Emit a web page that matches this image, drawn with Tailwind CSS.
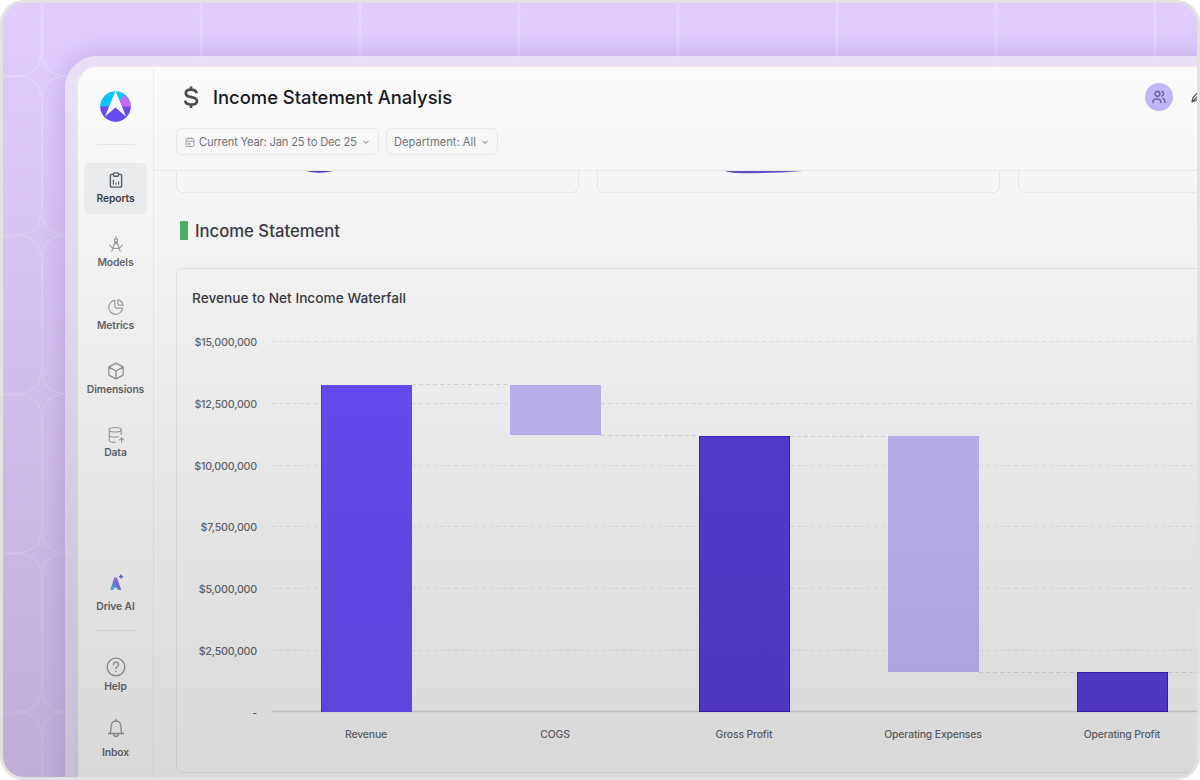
<!DOCTYPE html>
<html lang="en">
<head>
  <meta charset="UTF-8" />
  <meta name="viewport" content="width=device-width, initial-scale=1.0"/>
  <title>Income Statement Analysis</title>
  <script src="https://cdn.jsdelivr.net/npm/@tailwindcss/browser@4"></script>
</head>

<body class="bg-white font-['Inter','Liberation_Sans',sans-serif]">

  <div class="relative w-[1200px] h-[780px] rounded-[24px] border-[3px] border-[#e2e2e0] bg-[#e0cdfe] overflow-hidden">

    <!-- Background tiles -->
    <svg class="absolute inset-0" width="1194" height="774" fill="none">
      <defs>
        <pattern id="grid" x="38.5" y="73" width="159" height="159" patternUnits="userSpaceOnUse">
          <g stroke="#fff" stroke-opacity=".27">
            <path d="M.5 22v115M159.5 22v115" stroke-width="2"/>
            <path d="M22 .5h115M22 159.5h115" stroke-width="2"/>
            <path d="M.5 22C1 9 9 1 22 .5M137 .5C150 1 158 9 158.5 22M158.5 137C158 150 150 158 137 158.5M22 158.5C9 158 1 150 .5 137" stroke-width="1.2"/>
          </g>
        </pattern>
      </defs>
      <rect width="1194" height="774" fill="url(#grid)"/>
    </svg>

    <!-- Glass frame -->
    <div class="relative ml-[62px] mt-[53px] w-[1180px] h-[760px] rounded-tl-[32px] bg-[#eee7f5]/80 pl-[10px] pt-[10px] shadow-[0_0_26px_rgba(85,45,150,0.2)]">
      <div class="w-full h-full rounded-tl-[22px] bg-linear-to-b from-[#ece9fa] to-[#dfe1f4] pl-[3px]">
        <div class="flex w-full h-full rounded-tl-[20px] bg-[#fefefe] border-t border-[#fbeaf6]">

          <!-- Sidebar -->
          <aside class="w-[76px] shrink-0 border-r border-[#f0f0f0] flex flex-col items-center text-[10.3px] font-semibold tracking-[-0.1px] leading-[14px] text-[#686b72]">
            <svg class="mt-[24px] shrink-0" width="31" height="31" viewBox="0 0 31 31">
              <clipPath id="disc"><circle cx="15.5" cy="15.5" r="15.3"/></clipPath>
              <g clip-path="url(#disc)">
                <path d="M0 0h31v16H0z" fill="#0ec8fc"/>
                <path d="M19 11l6-7 6 2v10H21z" fill="#c86cf0"/>
                <path d="M0 15.5h31V31H0z" fill="#6a4cf6"/>
                <path d="M15.5 0L26 25.5 15.5 16.5 5 25.5z" fill="#fff"/>
              </g>
            </svg>
            <div class="mt-[22px] w-[38px] h-px shrink-0 bg-[#ebebeb]"></div>

            <nav class="mt-[18px] flex flex-col gap-[12.5px]">
              <a class="w-[63px] h-[51px] rounded-[6px] bg-[#f1f3f4] flex flex-col items-center pt-[8px] text-[#3f434a]">
                <svg width="18" height="18" viewBox="0 0 24 24" fill="none" stroke="#565b61" stroke-width="1.8" stroke-linecap="round" stroke-linejoin="round">
                  <path d="M8.5 4.5H6.5a2 2 0 0 0-2 2v13a2 2 0 0 0 2 2h11a2 2 0 0 0 2-2v-13a2 2 0 0 0-2-2h-2"/>
                  <rect x="8.5" y="2.5" width="7" height="4.5" rx="1.8"/>
                  <path stroke-width="1.5" d="M8.5 12.5v5M12 16v1.500M15.5 14.5v3"/>
                </svg>
                <span class="mt-[2px]">Reports</span>
              </a>
              <a class="w-[63px] h-[51px] flex flex-col items-center pt-[8px]">
                <svg width="18" height="18" viewBox="0 0 24 24" fill="none" stroke="#a3a5a8" stroke-width="1.6" stroke-linecap="round" stroke-linejoin="round">
                  <circle cx="12" cy="7" r="2.2"/>
                  <path d="M12 2.5v2.3M10.8 9L6.5 21.5M13.2 9l4.3 12.5M3.5 13.5c2.2 3.3 5.2 4.5 8.5 4.5s6.3-1.2 8.5-4.5M10 13l2-4 2 4"/>
                </svg>
                <span class="mt-[2px]">Models</span>
              </a>
              <a class="w-[63px] h-[51px] flex flex-col items-center pt-[8px]">
                <svg width="18" height="18" viewBox="0 0 24 24" fill="none" stroke="#a3a5a8" stroke-width="1.6" stroke-linecap="round" stroke-linejoin="round">
                  <path d="M10.5 3.2a9.3 9.3 0 1 0 10.3 10.3h-8.3a2 2 0 0 1-2-2z"/>
                  <path d="M14.5 2.5v5a2 2 0 0 0 2 2h5a8.5 8.5 0 0 0-7-7z"/>
                </svg>
                <span class="mt-[2px]">Metrics</span>
              </a>
              <a class="w-[63px] h-[51px] flex flex-col items-center pt-[8px]">
                <svg width="18" height="18" viewBox="0 0 24 24" fill="none" stroke="#97999c" stroke-width="1.7" stroke-linecap="round" stroke-linejoin="round">
                  <path d="M12 1.5l9.5 5v11l-9.5 5-9.5-5v-11zM2.5 6.5L12 12l9.5-5.5M12 12v10.5"/>
                </svg>
                <span class="mt-[2px]">Dimensions</span>
              </a>
              <a class="w-[63px] h-[51px] flex flex-col items-center pt-[9px]">
                <svg width="18" height="18" viewBox="0 0 24 24" fill="none" stroke="#a3a5a8" stroke-width="1.6" stroke-linecap="round" stroke-linejoin="round">
                  <ellipse cx="11" cy="5" rx="8" ry="3"/>
                  <path d="M3 5v14c0 1.6 3.5 2.8 8 2.8M19 5v6.5M3 12c0 1.6 3.5 2.8 8 2.8 1.8 0 3.4-.2 4.7-.5M19.5 22v-6M16.8 18.5l2.7-2.7 2.7 2.7"/>
                </svg>
                <span class="mt-[1px]">Data</span>
              </a>
            </nav>

            <a class="mt-[106px] flex flex-col items-center">
              <svg width="18" height="18" viewBox="0 0 18 18">
                <defs>
                  <linearGradient id="ai" x1="0" y1="1" x2="1" y2="0">
                    <stop offset="0.15" stop-color="#45cdf2"/>
                    <stop offset="0.5" stop-color="#7c7aee"/>
                    <stop offset="0.85" stop-color="#c06ae0"/>
                  </linearGradient>
                </defs>
                <path d="M7.3 3.5h2.7L14.3 16h-3.1l-2.5-3-2.7 3H3.2z" fill="url(#ai)"/>
                <path d="M14 .5l.6 1.5 1.5.6-1.5.6-.6 1.5-.6-1.5-1.5-.6 1.5-.6z" fill="#7468d8" stroke="#7468d8" stroke-width=".8"/>
              </svg>
              <span class="mt-[7px]">Drive AI</span>
            </a>
            <div class="mt-[17px] w-[38px] h-px shrink-0 bg-[#e8e8e8]"></div>
            <a class="mt-[26px] flex flex-col items-center">
              <svg width="20" height="20" viewBox="0 0 20 20" fill="none" stroke="#97999c" stroke-width="1.3" stroke-linecap="round">
                <circle cx="10" cy="10" r="8.8"/>
                <path d="M7.5 7.8c0-3.6 5-3.4 5-.4 0 2-2.5 2-2.5 4.3M10 14.3v.2"/>
              </svg>
              <span class="mt-[2px]">Help</span>
            </a>
            <a class="mt-[25px] flex flex-col items-center">
              <svg width="20" height="20" viewBox="0 0 20 20" fill="none" stroke="#97999c" stroke-width="1.3" stroke-linecap="round" stroke-linejoin="round">
                <path d="M2.500 15.500h15M4 15.500c1-1.500 1-3 1-6.500 0-3.500 2-6 5-6s5 2.500 5 6c0 3.500 0 5 1 6.500M10 3V1.500M7.500 15.800c0 3.600 5 3.600 5 0"/>
              </svg>
              <span class="mt-[7px]">Inbox</span>
            </a>
          </aside>

          <main class="flex-1 min-w-0 overflow-hidden">

            <!-- Header -->
            <header class="h-[104px] border-b border-[#eeeeee] pl-[22px] pt-[16px]">
              <div class="flex items-center h-[28px]">
                <svg width="30" height="26" viewBox="0 0 30 26" fill="none" stroke="#4c4d4f" stroke-width="2.7">
                  <path d="M20.7 9.3C20.2 7 18 5.7 15 5.7c-3 0-5.2 1.4-5.2 3.7 0 5.4 11.2 2 11.2 7.6 0 2.4-2.3 3.7-5.8 3.7-3.4 0-5.7-1.5-6-4M15 2.5v3.5M15 20.5v3.5"/>
                </svg>
                <h1 class="mt-[2px] ml-[7px] text-[18.4px] font-medium text-[#17191d]">Income Statement Analysis</h1>
                <div class="ml-auto mr-[41px] flex items-center">
                  <div class="w-[28px] h-[28px] rounded-full bg-[#c5bafa] flex items-center justify-center">
                    <svg width="14" height="14" viewBox="0 0 14 14" fill="none" stroke="#65598f" stroke-width="1.3" stroke-linecap="round">
                      <circle cx="5.5" cy="3.8" r="2.5"/>
                      <path d="M1 12.5v-.8c0-3.8 7.8-3.8 7.800 0v.8M9.8 1.4c2.4.6 2.4 4.2 0 4.8M10.8 8.4c1.5.5 2.2 1.6 2.2 3.2v.9"/>
                    </svg>
                  </div>
                  <svg class="ml-[17px]" width="14" height="14" viewBox="0 0 14 14" fill="none" stroke="#57595d" stroke-width="1.2" stroke-linejoin="round">
                    <path d="M2 12l1-4.5 6-6 3 3-6 6zM2 12l5-5"/>
                  </svg>
                </div>
              </div>

              <div class="mt-[17px] flex gap-[7px] text-[11.2px] text-[#74767a]">
                <div class="w-[203px] h-[27px] rounded-[6px] border border-[#eeeeee] flex items-center pl-[8px] pt-[1px]">
                  <svg class="shrink-0" width="10" height="10" viewBox="0 0 10 10" fill="none" stroke="#9a9c9f" stroke-width=".9">
                    <rect x="1" y="1.5" width="8" height="8" rx="1.2"/>
                    <path d="M1 4.2h8M3.2.3v2M6.8.3v2M3 6.3h1.5v1.2H3z"/>
                  </svg>
                  <span class="ml-[4px] whitespace-nowrap tracking-[-0.2px]">Current Year: Jan 25 to Dec 25</span>
                  <svg class="ml-[5px] shrink-0" width="8" height="8" viewBox="0 0 8 8" fill="none" stroke="#a5a6a9" stroke-width="1.1"><path d="M1.5 2.8L4 5.2l2.5-2.4"/></svg>
                </div>
                <div class="w-[112px] h-[27px] rounded-[6px] border border-[#eeeeee] flex items-center pl-[7px] pt-[1px]">
                  <span class="whitespace-nowrap">Department: All</span>
                  <svg class="ml-[5px]" width="8" height="8" viewBox="0 0 8 8" fill="none" stroke="#a5a6a9" stroke-width="1.1"><path d="M1.5 2.8L4 5.2l2.5-2.4"/></svg>
                </div>
              </div>
            </header>

            <!-- Bottom edge of the KPI cards scrolled under the header -->
            <div class="ml-[22px] flex gap-[18px]">
              <div class="w-[403px] h-[22px] shrink-0 rounded-b-[7px] border border-t-0 border-[#efefef]">
                <svg class="ml-[129px] block" width="28" height="4"><path d="M0 0h27Q13 3.5 0 0z" fill="#5436c8"/></svg>
              </div>
              <div class="w-[403px] h-[22px] shrink-0 rounded-b-[7px] border border-t-0 border-[#efefef]">
                <svg class="ml-[127px] block" width="80" height="4"><path d="M0 0h78Q40 3 10 1.900 4 1.500 0 0z" fill="#6a4ed0"/></svg>
              </div>
              <div class="w-[403px] h-[22px] shrink-0 rounded-b-[7px] border border-t-0 border-[#efefef]"></div>
            </div>

            <div class="ml-[26px] mt-[25px] h-[24px] flex items-center">
              <div class="w-[8px] h-[19px] rounded-[1px] bg-[#4eb468]"></div>
              <h2 class="mt-[3px] ml-[7px] text-[16.7px] font-medium text-[#3a3d48]">Income Statement</h2>
            </div>

            <!-- Waterfall chart -->
            <section class="ml-[22px] mt-[26px] w-[1100px] h-[505px] rounded-[7px] border border-[#ebebeb]">
              <h3 class="ml-[15px] mt-[19px] text-[13.7px] leading-[20px] font-medium text-[#3a3d48]">Revenue to Net Income Waterfall</h3>
              <div class="flex mt-[27px]">
                <div class="mt-[1px] w-[80px] h-[385px] flex flex-col justify-between text-right text-[10.7px] tracking-[-0.2px] leading-[14px] font-medium text-[#686b72]">
                  <span>$15,000,000</span>
                  <span>$12,500,000</span>
                  <span>$10,000,000</span>
                  <span>$7,500,000</span>
                  <span>$5,000,000</span>
                  <span>$2,500,000</span>
                  <span>-</span>
                </div>
                <div class="ml-[15px]">
                  <svg class="mt-[5px] block" width="930" height="373" fill="none">
                    <g stroke="#eeeeee" stroke-dasharray="4 3">
                      <path d="M0 1.5h930" stroke="#e8e8e8"/>
                      <path d="M0 63.5h930" stroke="#e8e8e8"/>
                      <path d="M0 125.5h930M0 186.5h930M0 248.5h930M0 310.5h930" stroke="#ebebeb"/>
                    </g>
                    <g stroke="#e0e0e0" stroke-dasharray="4 3">
                      <path d="M140 44.5h98M329 95.5h98M518 96.5h98M707 332.5h98M896 332.5h34"/>
                    </g>
                    <path d="M0 371.5h930" stroke="#dcdcdc" stroke-width="1.5"/>
                    <rect x="49" y="45" width="91" height="327" fill="#6d4ffe"/>
                    <path d="M49.5 45v327" stroke="#5638cf"/>
                    <rect x="238" y="45" width="91" height="50" fill="#c8bcfb"/>
                    <rect x="427.5" y="96.5" width="90" height="275" fill="#5a3fde" stroke="#421fb8"/>
                    <rect x="616" y="96" width="91" height="236" fill="#c8bcfb"/>
                    <rect x="805.5" y="332.5" width="90" height="39" fill="#5a3fde" stroke="#421fb8"/>
                  </svg>
                  <div class="mt-[15px] flex text-center text-[10.4px] tracking-[-0.15px] leading-[14px] font-medium text-[#686b72]">
                    <span class="w-[188px] mr-px shrink-0">Revenue</span>
                    <span class="w-[188px] mr-px shrink-0">COGS</span>
                    <span class="w-[188px] mr-px shrink-0">Gross Profit</span>
                    <span class="w-[188px] mr-px shrink-0">Operating Expenses</span>
                    <span class="w-[188px] mr-px shrink-0">Operating Profit</span>
                  </div>
                </div>
              </div>
            </section>

          </main>
        </div>
      </div>
    </div>

    <!-- Shade over the whole scene -->
    <div class="absolute inset-0 bg-linear-to-b from-black/0 to-black/15"></div>
  </div>

</body>
</html>
